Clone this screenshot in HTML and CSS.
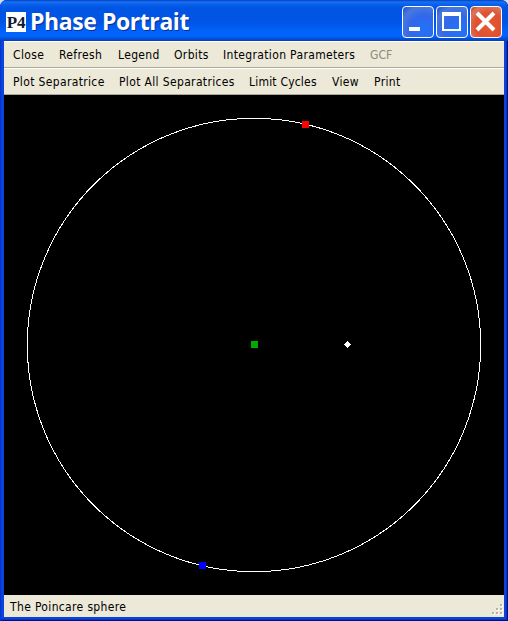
FILE: index.html
```html
<!DOCTYPE html>
<html lang="en">
<head>
<meta charset="utf-8">
<title>Phase Portrait</title>
<link rel="stylesheet" href="styles.css">
</head>
<body>
<div class="window">
  <header class="titlebar">
    <span class="app-icon">P4</span>
    <h1 class="title">Phase Portrait</h1>
    <div class="controls">
      <button class="control" aria-label="Minimize"><svg width="32" height="32" viewBox="0 0 32 32"><path d="M7 21h11v4H7z" fill="#fff"/></svg></button>
      <button class="control" aria-label="Maximize"><svg width="32" height="32" viewBox="0 0 32 32"><path d="M6 6h19v19H6zM8 10v13h15V10z" fill="#fff" fill-rule="evenodd"/></svg></button>
      <button class="control close" aria-label="Close"><svg width="32" height="32" viewBox="0 0 32 32"><path d="M7 7L24 24M24 7L7 24" stroke="#fff" stroke-width="4"/></svg></button>
    </div>
  </header>
  <nav class="menubar">
    <span class="item close-item">Close</span><span class="item refresh">Refresh</span><span class="item legend">Legend</span><span class="item orbits">Orbits</span><span class="item params">Integration Parameters</span><span class="item gcf disabled">GCF</span>
  </nav>
  <nav class="menubar">
    <span class="item plot">Plot Separatrice</span><span class="item plot-all">Plot All Separatrices</span><span class="item cycles">Limit Cycles</span><span class="item view">View</span><span class="item print">Print</span>
  </nav>
  <main class="canvas">
    <svg width="500" height="500" viewBox="0 0 500 500" shape-rendering="crispEdges">
      <circle cx="250" cy="250" r="226.700" fill="none" stroke="#fff"/>
      <path d="M298 26h7v7h-7z" fill="#f00"/>
      <path d="M247 246h7v7h-7z" fill="#0a0"/>
      <path d="M195 467h7v7h-7z" fill="#00f"/>
      <path d="M343 246h1v1h1v1h1v1h1v1h-1v1h-1v1h-1v1h-1v-1h-1v-1h-1v-1h-1v-1h1v-1h1v-1h1z" fill="#fff"/>
    </svg>
  </main>
  <footer class="status">
    <span class="status-text">The Poincare sphere</span>
    <svg class="grip" width="12" height="12" viewBox="0 0 12 12"><path d="M9 1h2v2H9zM9 5h2v2H9zM5 5h2v2H5zM9 9h2v2H9zM5 9h2v2H5zM1 9h2v2H1z" fill="#fff"/><path d="M8 0h2v2H8zM8 4h2v2H8zM4 4h2v2H4zM8 8h2v2H8zM4 8h2v2H4zM0 8h2v2H0z" fill="#b8b4a2"/></svg>
  </footer>
</div>
</body>
</html>
```
FILE: styles.css
```css
* { box-sizing: border-box; }
body { margin: 0; background: #d8dce8; }
.window {
  width: 508px;
  height: 621px;
  padding: 0 4px 4px;
  display: flex;
  flex-direction: column;
  border-radius: 7px 7px 0 0;
  overflow: hidden;
  background: #0a45d8;
  box-shadow: inset 1px 0 #0831d9, inset -1px -1px #00138c, inset -2px -2px #0831c0;
  font: 12px/16px "DejaVu Sans Condensed", "DejaVu Sans", sans-serif;
  letter-spacing: 0.35px;
  color: #000;
}
.titlebar {
  flex: 0 0 41px;
  margin: 0 -4px;
  padding: 3px 6px 0;
  display: flex;
  align-items: center;
  border-bottom: 1px solid #0c40b0;
  background: linear-gradient(#0a3fc0 0, #1672f5 2px, #0a62ee 4px, #0054e3 8px, #0055e5 22px, #0262fa 31px, #0264fc 36px, #0048cc 40px);
}
.app-icon {
  width: 20px;
  height: 20px;
  background: #fff;
  color: #101a38;
  font: bold 17px/21px "Liberation Serif", serif;
  letter-spacing: -0.3px;
  text-align: center;
}
.title {
  margin: -2px 0 0 4px;
  font: bold 23px/30px "Open Sans", sans-serif;
  letter-spacing: -0.42px;
  color: #fff;
  text-shadow: 1px 1px #0a2f90;
  white-space: nowrap;
}
.controls { margin-left: auto; display: flex; gap: 2px; }
.control {
  width: 32px;
  height: 32px;
  padding: 0;
  border: 1px solid #fff;
  border-radius: 4px;
  background: radial-gradient(circle at 70% 75%, #2074fa 0, #3268ea 45%, #4878df 75%, #2450c8 100%);
}
.control svg { display: block; margin: -1px; }
.control.close { background: radial-gradient(circle at 60% 65%, #e65a30 0, #df5030 50%, #dc765e 80%, #bb3b1c 100%); }
.menubar {
  flex: 0 0 27px;
  padding: 5px 0 0 9px;
  display: flex;
  background: #ece9d8;
  border-bottom: 1px solid #aca899;
  border-top: 1px solid #fff;
  white-space: nowrap;
}
.item { flex: none; }
.close-item { width: 46px; }
.refresh { width: 59px; }
.legend { width: 56px; }
.orbits { width: 49px; }
.params { width: 147px; }
.plot { width: 106px; }
.plot-all { width: 130px; }
.cycles { width: 83px; letter-spacing: 0.2px; }
.view { width: 42px; }
.gcf { letter-spacing: 0.1px; }
.disabled { color: #8d8a7c; }
.canvas { flex: 0 0 500px; background: #000; }
.canvas svg { display: block; }
.status {
  flex: 0 0 22px;
  padding: 0 0 0 6px;
  display: flex;
  align-items: center;
  justify-content: space-between;
  background: #ece9d8;
}
.status-text { padding-top: 2px; }
.grip { align-self: flex-end; margin-bottom: 1px; }
```
